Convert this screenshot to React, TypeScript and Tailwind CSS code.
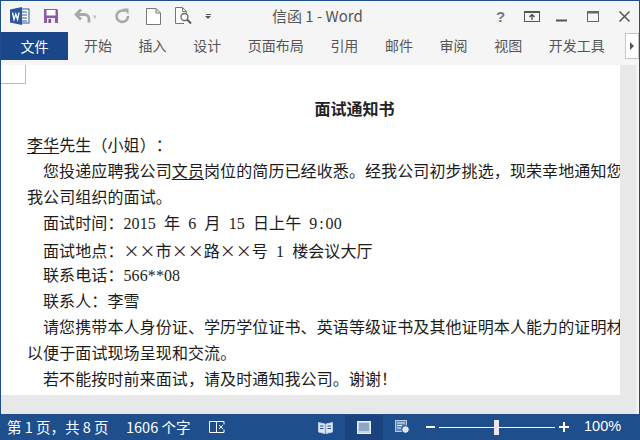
const cjk = "font-['Microsoft_YaHei','Noto_Sans_CJK_SC',sans-serif]";

function WordLogo() {
  return (
    <svg width="20" height="18" viewBox="0 0 20 18" className="shrink-0">
      <rect x="8" y="2" width="11" height="14" fill="#fff" stroke="#2b579a" />
      <path d="M11 5h6M11 8h6M11 11h6M11 14h6" stroke="#2b579a" strokeWidth="1" />
      <path d="M0 2.5 12 0v18L0 15.5z" fill="#2b579a" />
      <path d="M2.5 5.5 4 12.500 5.800 7l1.800 5.500L9 5.500" fill="none" stroke="#fff" strokeWidth="1.300" />
    </svg>
  );
}

function Save() {
  return (
    <svg width="16" height="16" viewBox="0 0 16 16" className="shrink-0">
      <path d="M1 1h13l1 1v13H1z" fill="#8d5ba8" />
      <rect x="3.500" y="2" width="9" height="5.500" fill="#fff" />
      <rect x="4" y="10" width="8" height="5" fill="#f0ebf3" />
      <rect x="5.500" y="11" width="2.500" height="4" fill="#7a4b97" />
    </svg>
  );
}

function Undo() {
  return (
    <svg width="18" height="16" viewBox="0 0 18 16" className="shrink-0">
      <path d="M7 1.500 2 6.500l5 5" fill="none" stroke="#a8a8a8" strokeWidth="2.800" />
      <path d="M3 6.500h7.500a4.500 4.500 0 0 1 4.500 4.500v3.500" fill="none" stroke="#a8a8a8" strokeWidth="2.800" />
    </svg>
  );
}

function Redo() {
  return (
    <svg width="15" height="16" viewBox="0 0 15 16" className="shrink-0">
      <path d="M10 3.200A5.700 5.700 0 1 0 13 8" fill="none" stroke="#a8a8a8" strokeWidth="2.600" />
      <path d="M7.500 .5h6v6z" fill="#a8a8a8" />
    </svg>
  );
}

function Page() {
  return (
    <svg width="15" height="17" viewBox="0 0 15 17" className="shrink-0">
      <path d="M.5.500h9.500l4.500 4.500v11.500H.5z M10 .5V5h4.500" fill="#fff" stroke="#777" />
    </svg>
  );
}

function Preview() {
  return (
    <svg width="18" height="18" viewBox="0 0 18 18" className="shrink-0">
      <path d="M9 16.500H.5V.5h7l4 4V6M7.500.5v4h4" fill="#fff" stroke="#777" />
      <circle cx="9.500" cy="10" r="3.500" fill="#fff" stroke="#666" strokeWidth="1.300" />
      <path d="m12 12.500 4 4" stroke="#555" strokeWidth="1.800" />
    </svg>
  );
}

function WinButtons() {
  return (
    <div className="flex items-center text-[#6a6a6a]">
      <span className="w-[10px] text-[15px] font-bold leading-none font-['Liberation_Sans',sans-serif] text-[#777]">?</span>
      <svg width="16" height="11" viewBox="0 0 16 11" className="ml-[18px]">
        <rect x=".5" y=".5" width="15" height="10" fill="none" stroke="#555" />
        <path d="M1 1.500h14" stroke="#555" />
        <path d="M8 9V4M5.500 6 8 3.500 10.500 6" fill="none" stroke="#444" strokeWidth="1.200" />
      </svg>
      <svg width="11" height="11" viewBox="0 0 11 11" className="ml-[16px]">
        <path d="M0 9.500h11" stroke="#555" strokeWidth="2" />
      </svg>
      <svg width="12" height="11" viewBox="0 0 12 11" className="ml-[20px]">
        <rect x=".5" y=".5" width="11" height="10" fill="none" stroke="#666" />
        <path d="M0 1.500h12" stroke="#666" strokeWidth="2" />
      </svg>
      <svg width="11" height="11" viewBox="0 0 11 11" className="ml-[20px]">
        <path d="m.5.500 10 10M10.500.5l-10 10" stroke="#555" strokeWidth="1.500" />
      </svg>
    </div>
  );
}

function A({ t }: { t: string }) {
  return <span className="whitespace-pre [word-spacing:4px]">{t}</span>;
}

function X() {
  return <span className="inline-block w-4 text-center font-['Noto_Sans_CJK_SC',sans-serif]">×</span>;
}

function Line({ children, indent = true }: { children: React.ReactNode; indent?: boolean }) {
  return <div className={`h-[26px] leading-[26px] whitespace-nowrap tracking-[0.1px] ${indent ? "pl-4" : ""}`}>{children}</div>;
}

const tabs = ["开始", "插入", "设计", "页面布局", "引用", "邮件", "审阅", "视图", "开发工具"];

export default function App() {
  return (
    <div lang="zh-CN" className={`w-[640px] h-[440px] flex flex-col overflow-hidden bg-[#f5f5f5] border-l border-r border-t border-[#1f4e8c] ${cjk}`}>
      <div className="h-[30px] shrink-0 flex items-center pl-[9px] pr-[9px]">
        <WordLogo />
        <div className="ml-[13px]"><Save /></div>
        <div className="ml-[15px]"><Undo /></div>
        <span className="ml-[1px] text-[7px] text-[#bbb]">▾</span>
        <div className="ml-[18px]"><Redo /></div>
        <div className="ml-[16px]"><Page /></div>
        <div className="ml-[14px]"><Preview /></div>
        <div className="ml-[12px] flex flex-col items-center gap-[1px]">
          <div className="w-[5px] h-px bg-[#555]" />
          <div className="w-0 h-0 border-x-[3px] border-x-transparent border-t-[3px] border-t-[#555]" />
        </div>
        <div className="ml-[61px] w-[120px] text-[15px] text-[#555] whitespace-nowrap">信函 1 - Word</div>
        <div className="ml-auto"><WinButtons /></div>
      </div>

      <div className="h-[34px] shrink-0 flex items-start text-[14px] text-[#555]">
        <div className="w-[67px] h-[28px] mt-px bg-[#19478a] text-white flex items-center justify-center shrink-0">文件</div>
        <div className="flex gap-[26.6px] ml-[16px] h-[28px] items-center whitespace-nowrap">
          {tabs.map((t) => <span key={t}>{t}</span>)}
        </div>
        <div className="ml-auto mt-[2px] w-[14px] h-[26px] bg-white border border-[#c6c6c6] flex items-center justify-center">
          <div className="w-0 h-0 border-y-[4px] border-y-transparent border-l-[4px] border-l-[#555]" />
        </div>
      </div>

      <div className="flex-1 min-h-0 flex">
        <div className="w-[635px] flex flex-col bg-[#e8e8e8]">
          <div className="relative w-[619px] h-[330px] shrink-0 bg-white overflow-hidden pl-[26px] pt-[32px] text-[16px] text-[#1c1c1c] [text-spacing-trim:space-all] font-['Liberation_Serif','Noto_Sans_CJK_SC',serif]">
            <div className="absolute left-0 top-0 w-[25px] h-[19px] border-r border-b border-[#bdbdbd]" />
            <div className="h-[26px] leading-[26px] text-center pl-[62px] font-bold whitespace-nowrap text-[#222]">面试通知书</div>
            <div className="h-[10px]" />
            <Line indent={false}><span className="underline underline-offset-2">李华</span>先生（小姐）：</Line>
            <Line>您投递应聘我公司<span className="underline underline-offset-2">文员</span>岗位的简历已经收悉。经我公司初步挑选，现荣幸地通知您</Line>
            <Line indent={false}>我公司组织的面试。</Line>
            <Line>面试时间：<A t="2015 " />年<A t=" 6 " />月<A t=" 15 " />日上午<A t=" 9" /><span className="px-[1.8px]">:</span>00</Line>
            <Line>面试地点：<X /><X />市<X /><X />路<X /><X />号<A t=" 1 " />楼会议大厅</Line>
            <Line>联系电话：<A t="566**08" /></Line>
            <Line>联系人：李雪</Line>
            <Line>请您携带本人身份证、学历学位证书、英语等级证书及其他证明本人能力的证明材料，</Line>
            <Line indent={false}>以便于面试现场呈现和交流。</Line>
            <Line>若不能按时前来面试，请及时通知我公司。谢谢！</Line>
          </div>
        </div>
        <div className="flex-1 bg-[#f5f5f5]" />
      </div>

      <div className="h-[26px] shrink-0 -ml-px bg-[#1f4e8c] flex items-center text-[14.5px] text-white whitespace-nowrap">
        <span className="ml-[7px] w-[101px]">第 1 页，共 8 页</span>
        <span className="ml-[18px] w-[64px]">1606 个字</span>
        <svg width="16" height="14" viewBox="0 0 16 14" className="ml-[19px]">
          <path d="M.5 1.500h7v11h-7zM7.500 1.500h7.500M7.500 12.500h7.500M15 1.500v3M15 9.500v3" fill="none" stroke="#fff" />
          <path d="m10 5 4 4M14 5l-4 4" stroke="#fff" />
        </svg>
        <svg width="15" height="13" viewBox="0 0 15 13" className="ml-[93px]">
          <path d="M.5 1.500 7 3v9.500L.5 11zM14.500 1.500 8 3v9.500l6.500-1.500z" fill="#dfe7f2" stroke="#b9cbe3" />
          <path d="M2 5h3.500M2 7.500h3.500M9.500 5H13M9.500 7.500H13" stroke="#1f4e8c" />
        </svg>
        <div className="ml-[12px] w-[38px] h-[25px] bg-[#19437e] flex items-center justify-center">
          <svg width="14" height="13" viewBox="0 0 14 13">
            <rect x=".5" y=".5" width="13" height="12" fill="#c9d6e8" stroke="#e8eef6" />
            <path d="M2 3h10M2 5h10M2 7h10M2 9h10" stroke="#5877a6" />
          </svg>
        </div>
        <svg width="15" height="14" viewBox="0 0 15 14" className="ml-[12px]">
          <rect x=".5" y=".5" width="11" height="11" fill="#5f83b5" stroke="#b9cbe3" />
          <path d="M2 3h8M2 5.500h5M2 8h4" stroke="#e8eef6" />
          <circle cx="10.500" cy="9.500" r="3.800" fill="#dfe7f2" stroke="#1f4e8c" />
        </svg>
        <div className="ml-[16px] w-[9px] h-[2px] bg-white" />
        <div className="relative ml-[4px] w-[116px] h-px bg-white">
          <div className="absolute left-[55px] -top-[7px] w-[5px] h-[15px] bg-[#e8e8e8]" />
        </div>
        <svg width="10" height="10" viewBox="0 0 10 10" className="ml-[4px]">
          <path d="M0 5h10M5 0v10" stroke="#fff" strokeWidth="2" />
        </svg>
        <span className="ml-[15px] font-['Liberation_Sans',sans-serif]">100%</span>
      </div>
    </div>
  );
}
